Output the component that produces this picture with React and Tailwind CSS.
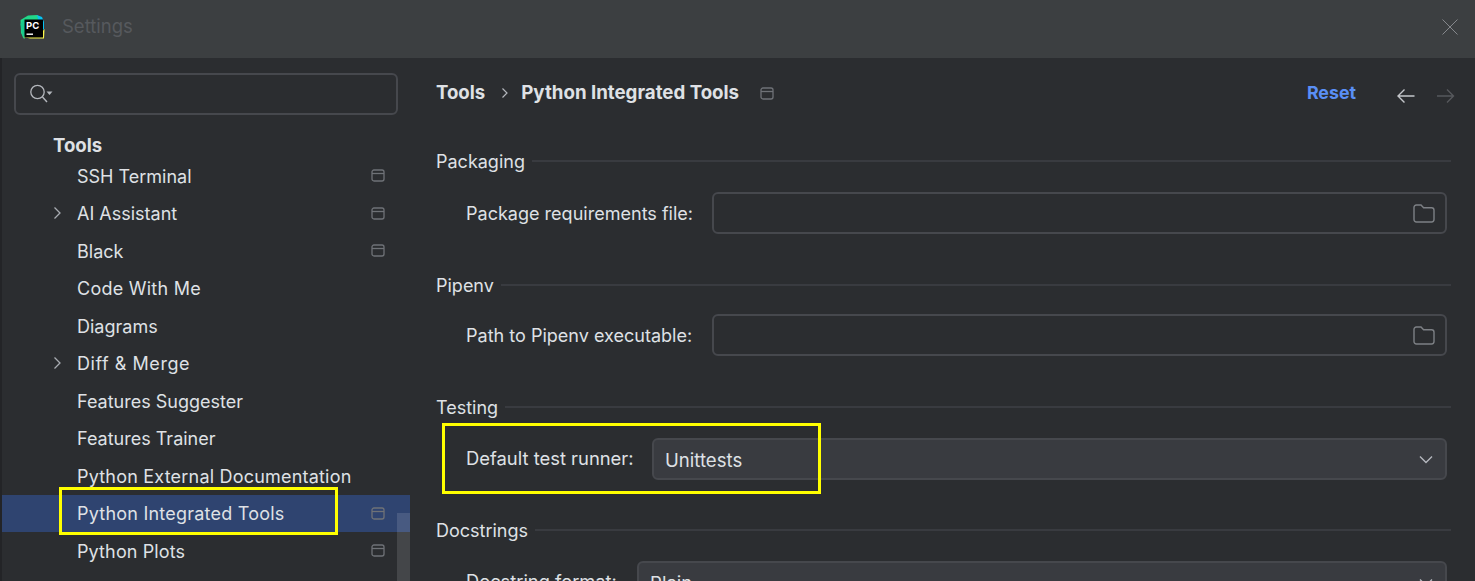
import React from "react";

const font = { fontFamily: "Inter, 'Noto Sans', sans-serif" };

function Pin({ className = "" }) {
  return (
    <svg width="14" height="13" viewBox="0 0 14 13" fill="none" className={className}>
      <rect x="1" y="1" width="12" height="11" rx="2" stroke="#6f7277" strokeWidth="1.3" />
      <path d="M1 4.5H13" stroke="#6f7277" strokeWidth="1.3" />
    </svg>
  );
}

function Folder() {
  return (
    <svg width="22" height="19" viewBox="0 0 22 19" fill="none">
      <path d="M1 3.5C1 2.1 2 1 3.4 1H8L10.6 3.8H18.6C20 3.8 21 4.9 21 6.2V15.6C21 17 20 18 18.6 18H3.4C2 18 1 17 1 15.6V3.5Z" stroke="#7d8085" strokeWidth="1.4" />
    </svg>
  );
}

function Chevron() {
  return (
    <svg width="10" height="14" viewBox="0 0 10 14" fill="none">
      <path d="M2.5 1.5L8 7L2.5 12.5" stroke="#a9acb2" strokeWidth="1.3" />
    </svg>
  );
}

function Row({ label, pin, arrow, selected, tracking = "" }) {
  return (
    <div className={`flex h-[37.5px] items-center pr-[25px] ${selected ? "bg-[#2f4470]" : ""}`}>
      <div className="flex w-[75px] shrink-0 pl-[50px]">{arrow ? <Chevron /> : null}</div>
      <span className={`flex-1 whitespace-nowrap pt-px text-[18px] text-[#dfe1e5] ${tracking}`}>{label}</span>
      {pin ? <Pin /> : null}
    </div>
  );
}

function SectionTitle({ label, className = "" }) {
  return (
    <div className={`flex h-[26px] items-center gap-[7px] ${className}`}>
      <span className="whitespace-nowrap text-[18px] text-[#dfe1e5]">{label}</span>
      <div className="h-[2px] flex-1 bg-[#393b40]" />
    </div>
  );
}

function Field({ label, className = "" }) {
  return (
    <div className={`flex items-center pl-[30px] pr-[4px] ${className}`}>
      <span className="w-[246px] shrink-0 whitespace-nowrap pt-[2px] text-[18.05px] text-[#dfe1e5]">{label}</span>
      <div className="flex h-[42px] flex-1 items-center justify-end rounded-[6px] border-2 border-[#46484d] pr-[10px]">
        <Folder />
      </div>
    </div>
  );
}

function Select({ label, labelClass, value, className = "" }) {
  return (
    <div className={`flex items-center pl-[30px] pr-[4px] ${className}`}>
      <span className={`shrink-0 whitespace-nowrap text-[#dfe1e5] ${labelClass}`}>{label}</span>
      <div className="flex h-[42px] flex-1 items-center justify-between rounded-[6px] border-2 border-[#46484d] bg-[#393b40] pl-[11px] pr-[12px]">
        <span className="pt-[3px] text-[18.6px] text-[#dfe1e5]">{value}</span>
        <svg width="14" height="9" viewBox="0 0 14 9" fill="none">
          <path d="M1 1.5L7 7.5L13 1.5" stroke="#b4b7bd" strokeWidth="1.4" />
        </svg>
      </div>
    </div>
  );
}

export default function App() {
  return (
    <div className="relative h-[581px] w-[1475px] overflow-hidden bg-[#2b2d30]" style={font}>
      {/* Title bar */}
      <div className="flex h-[58px] items-center bg-[#3c3f41] pb-[4px] pl-[20px] pr-[17px]">
        <svg width="26" height="26" viewBox="0 0 26 26" className="shrink-0">
          <path d="M0.5 6L8 1.5L17 1L21 4L22 7L4 25L1 19Z" fill="#21d789" />
          <path d="M0.5 10L4 5L6 22L3 24Z" fill="#18c98d" />
          <path d="M17 1L22 3L24 8L24 16L20 12Z" fill="#07c3f2" />
          <path d="M3 23L10 24.5L24 24.5L24.5 15L22 18Z" fill="#fcf84a" />
          <rect x="4.5" y="5.5" width="18.5" height="18" fill="#000" />
          <text x="6" y="14.5" fontSize="9.5" fontWeight="700" fill="#fff" style={font}>PC</text>
          <rect x="6.5" y="19.5" width="6.5" height="1.4" fill="#fff" />
        </svg>
        <span className="ml-[16px] text-[18.5px] text-[#56595d]">Settings</span>
        <svg width="16" height="16" viewBox="0 0 16 16" className="ml-auto" fill="none">
          <path d="M0.5 0.5L15.5 15.5M15.5 0.5L0.5 15.5" stroke="#85888c" strokeWidth="1" />
        </svg>
      </div>

      <div className="flex h-[523px]">
        {/* Sidebar */}
        <div className="relative w-[410px] shrink-0 border-l-2 border-[#232427] bg-[#2b2d30] ">
          <div className="ml-[12px] mr-[12px] mt-[15px] flex h-[42px] items-center rounded-[6px] border-2 border-[#46484d] pl-[13px]">
            <svg width="26" height="20" viewBox="0 0 26 20" fill="none">
              <circle cx="8.5" cy="8" r="6.7" stroke="#b4b7bd" strokeWidth="1.3" />
              <path d="M13.5 13L18 18" stroke="#b4b7bd" strokeWidth="1.4" />
              <path d="M17.5 7.5H23.5L20.5 11Z" fill="#b4b7bd" />
            </svg>
          </div>
          <div className="mt-[18px] flex h-[26px] items-center pl-[51px] text-[18.6px] font-bold text-[#dfe1e5]">Tools</div>
          <div className="mt-[-2px]">
            <Row label="SSH Terminal" pin />
            <Row label="AI Assistant" pin arrow />
            <Row label="Black" pin />
            <Row label="Code With Me" tracking="tracking-[0.25px]" />
            <Row label="Diagrams" />
            <Row label="Diff & Merge" arrow tracking="tracking-[0.55px]" />
            <Row label="Features Suggester" />
            <Row label="Features Trainer" />
            <Row label="Python External Documentation" tracking="tracking-[0.2px]" />
            <Row label="Python Integrated Tools" pin selected tracking="tracking-[0.22px]" />
            <Row label="Python Plots" pin tracking="tracking-[0.12px]" />
          </div>
          <div className="absolute bottom-0 right-0 top-[455px] w-[13px] bg-[#ffffff1f]" />
        </div>

        {/* Main */}
        <div className="min-w-0 flex-1 pl-[26px] pr-[24px]">
          <div className="flex h-[70px] items-center">
            <span className="text-[18.6px] font-bold text-[#dfe1e5]">Tools</span>
            <svg width="10" height="12" viewBox="0 0 10 12" fill="none" className="ml-[15px]">
              <path d="M2.5 1.5L7 6L2.5 10.5" stroke="#b4b7bd" strokeWidth="1.2" />
            </svg>
            <span className="ml-[11px] text-[18.7px] font-bold text-[#dfe1e5]">Python Integrated Tools</span>
            <Pin className="ml-[21px]" />
            <span className="ml-auto text-[17.8px] font-bold text-[#5a8ff6]">Reset</span>
            <svg width="20" height="16" viewBox="0 0 20 16" fill="none" className="ml-[40px] mt-[6px]">
              <path d="M18.5 8H2M8.5 1.5L2 8L8.5 14.5" stroke="#c4c6ca" strokeWidth="1.4" />
            </svg>
            <svg width="20" height="16" viewBox="0 0 20 16" fill="none" className="ml-[20px] mr-[-5px] mt-[6px]">
              <path d="M1 8H17.5M11 1.5L17.5 8L11 14.5" stroke="#56585c" strokeWidth="1.4" />
            </svg>
          </div>
          <SectionTitle label="Packaging" className="mt-[20px]" />
          <Field label="Package requirements file:" className="mt-[18px]" />
          <SectionTitle label="Pipenv" className="mt-[38px]" />
          <Field label="Path to Pipenv executable:" className="mt-[16px]" />
          <SectionTitle label="Testing" className="mt-[38px]" />
          <Select label="Default test runner:" labelClass="w-[186px] text-[18.4px]" value="Unittests" className="mt-[18px]" />
          <SectionTitle label="Docstrings" className="mt-[37px]" />
          <Select label="Docstring format:" labelClass="w-[171px] text-[18.3px]" value="Plain" className="mt-[18px]" />
        </div>
      </div>

      {/* Annotation boxes */}
      <div className="absolute left-[59px] top-[487px] h-[48px] w-[279px] border-[3px] border-[#ffff00]" />
      <div className="absolute left-[442px] top-[423px] h-[71px] w-[379px] border-[3px] border-[#ffff00]" />
    </div>
  );
}
